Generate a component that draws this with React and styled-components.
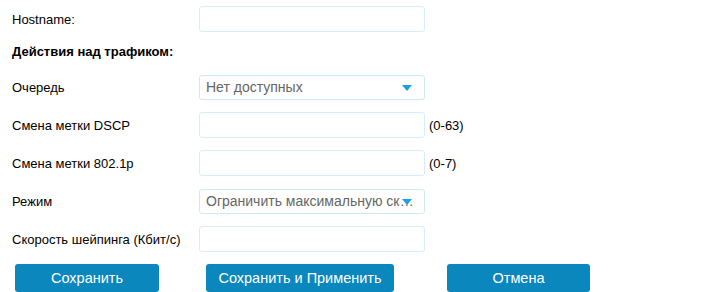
import React from "react";
import styled, { createGlobalStyle } from "styled-components";

const GlobalStyle = createGlobalStyle`
  body {
    margin: 0;
    background: #fff;
    font-family: "Liberation Sans", Arial, sans-serif;
    color: #000;
  }
`;

const fields = [
  { label: "Очередь", select: "Нет доступных" },
  { label: "Смена метки DSCP", hint: "(0-63)" },
  { label: "Смена метки 802.1p", hint: "(0-7)" },
  { label: "Режим", select: "Ограничить максимальную скорость" },
  { label: "Скорость шейпинга (Кбит/с)" },
];

export default function App() {
  return (
    <>
      <GlobalStyle />
      <Form>
        <Row>
          <Label>Hostname:</Label>
          <TextInput />
        </Row>
        <Heading>Действия над трафиком:</Heading>
        {fields.map((f) => (
          <Row key={f.label}>
            <Label>{f.label}</Label>
            {f.select ? (
              <Select title={f.select}>
                <SelectText>{f.select}</SelectText>
                <Arrow />
              </Select>
            ) : (
              <TextInput />
            )}
            {f.hint && <Hint>{f.hint}</Hint>}
          </Row>
        ))}
        <Buttons>
          <Button width="144px">Сохранить</Button>
          <Button width="188px" offset="47px">
            Сохранить и Применить
          </Button>
          <Button width="143px" offset="53px">
            Отмена
          </Button>
        </Buttons>
      </Form>
    </>
  );
}

const Form = styled.div`
  padding: 6px 0 0 12px;
  display: flex;
  flex-direction: column;
  gap: 12px;
`;

const Row = styled.div`
  display: flex;
  align-items: center;
  height: 26px;
`;

const Label = styled.div`
  width: 187px;
  font-size: 13px;
`;

const Heading = styled.div`
  font-size: 13px;
  font-weight: bold;
  height: 16px;
  line-height: 16px;
  margin-bottom: 2px;
`;

const TextInput = styled.div`
  box-sizing: border-box;
  width: 226px;
  height: 26px;
  border: 1px solid #d4eefb;
  border-radius: 3px;
  background: #fff;
`;

const Select = styled.div`
  position: relative;
  box-sizing: border-box;
  width: 226px;
  height: 25px;
  border: 1px solid #cdeaf9;
  border-radius: 3px;
  padding: 0 4px 0 6px;
  display: flex;
  align-items: center;
`;

const SelectText = styled.span`
  font-size: 14px;
  color: #666;
  white-space: nowrap;
  overflow: hidden;
  text-overflow: ellipsis;
`;

const Arrow = styled.span`
  position: absolute;
  left: 202px;
  top: 9px;
  width: 0;
  height: 0;
  border-left: 5px solid transparent;
  border-right: 5px solid transparent;
  border-top: 6px solid #1aa1e5;
`;

const Hint = styled.span`
  font-size: 13px;
  margin-left: 4px;
`;

const Buttons = styled.div`
  display: flex;
  padding-left: 3px;
`;

const Button = styled.div`
  box-sizing: border-box;
  width: ${(p) => p.width};
  margin-left: ${(p) => p.offset || 0};
  height: 28px;
  border-radius: 3px;
  background: #0a87bd;
  color: #fff;
  font-size: 14.5px;
  display: flex;
  align-items: center;
  justify-content: center;
`;
